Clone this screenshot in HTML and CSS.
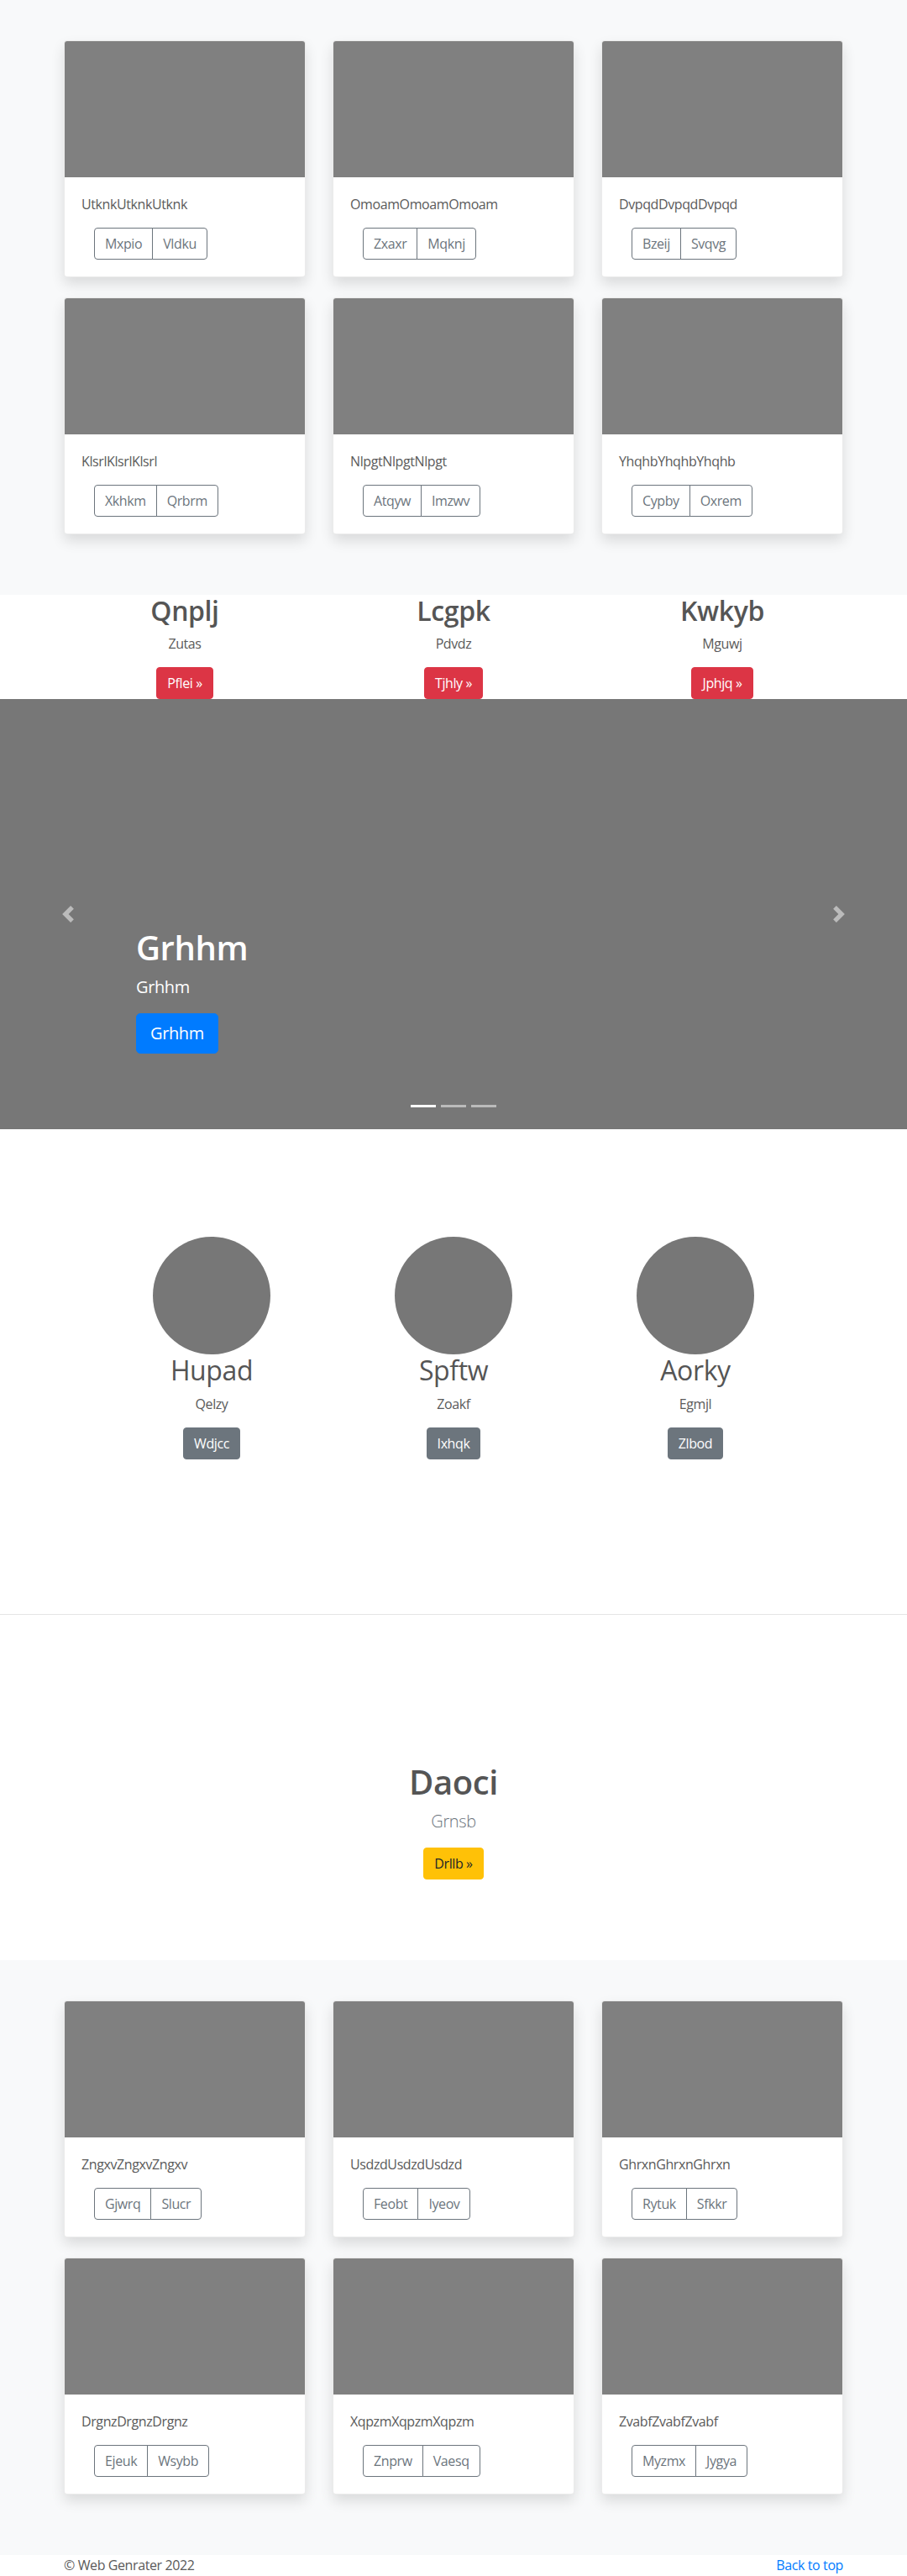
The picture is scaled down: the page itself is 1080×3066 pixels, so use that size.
FILE: index.html
```html
<!DOCTYPE html>
<html lang="en">
<head>
<meta charset="utf-8">
<title>Web Genrater</title>
<link rel="stylesheet" href="styles.css">
</head>
<body>
<main>
  <section class="album">
    <div class="card-grid">
      <div class="card"><div class="card-img"></div><div class="card-body"><p class="card-text">UtknkUtknkUtknk</p><div class="btn-group"><button class="btn btn-outline first">Mxpio</button><button class="btn btn-outline last">Vldku</button></div></div></div>
      <div class="card"><div class="card-img"></div><div class="card-body"><p class="card-text">OmoamOmoamOmoam</p><div class="btn-group"><button class="btn btn-outline first">Zxaxr</button><button class="btn btn-outline last">Mqknj</button></div></div></div>
      <div class="card"><div class="card-img"></div><div class="card-body"><p class="card-text">DvpqdDvpqdDvpqd</p><div class="btn-group"><button class="btn btn-outline first">Bzeij</button><button class="btn btn-outline last">Svqvg</button></div></div></div>
      <div class="card"><div class="card-img"></div><div class="card-body"><p class="card-text">KlsrlKlsrlKlsrl</p><div class="btn-group"><button class="btn btn-outline first">Xkhkm</button><button class="btn btn-outline last">Qrbrm</button></div></div></div>
      <div class="card"><div class="card-img"></div><div class="card-body"><p class="card-text">NlpgtNlpgtNlpgt</p><div class="btn-group"><button class="btn btn-outline first">Atqyw</button><button class="btn btn-outline last">Imzwv</button></div></div></div>
      <div class="card"><div class="card-img"></div><div class="card-body"><p class="card-text">YhqhbYhqhbYhqhb</p><div class="btn-group"><button class="btn btn-outline first">Cypby</button><button class="btn btn-outline last">Oxrem</button></div></div></div>
    </div>
  </section>

  <section class="features">
    <div class="col3">
      <div class="feature"><h2 class="feature-title">Qnplj</h2><p class="feature-text">Zutas</p><a class="btn btn-danger">Pflei &raquo;</a></div>
      <div class="feature"><h2 class="feature-title">Lcgpk</h2><p class="feature-text">Pdvdz</p><a class="btn btn-danger">Tjhly &raquo;</a></div>
      <div class="feature"><h2 class="feature-title">Kwkyb</h2><p class="feature-text">Mguwj</p><a class="btn btn-danger">Jphjq &raquo;</a></div>
    </div>
  </section>

  <section class="carousel">
    <div class="carousel-caption">
      <h1 class="caption-title">Grhhm</h1>
      <p class="caption-text">Grhhm</p>
      <a class="btn btn-primary btn-lg">Grhhm</a>
    </div>
    <a class="carousel-control prev" aria-label="Previous">
      <svg class="control-icon" viewBox="0 0 8 8" width="20" height="20"><path fill="#fff" d="M5.25 0l-4 4 4 4 1.5-1.5L4.25 4l2.5-2.5L5.25 0z"/></svg>
    </a>
    <a class="carousel-control next" aria-label="Next">
      <svg class="control-icon" viewBox="0 0 8 8" width="20" height="20"><path fill="#fff" d="M2.75 0l-1.5 1.5L3.75 4l-2.5 2.5L2.75 8l4-4-4-4z"/></svg>
    </a>
    <ol class="indicators">
      <li class="indicator active"></li>
      <li class="indicator"></li>
      <li class="indicator"></li>
    </ol>
  </section>

  <section class="team">
    <div class="team-grid">
      <div class="member"><div class="avatar"></div><h2 class="member-name">Hupad</h2><p class="member-role">Qelzy</p><a class="btn btn-secondary">Wdjcc</a></div>
      <div class="member"><div class="avatar"></div><h2 class="member-name">Spftw</h2><p class="member-role">Zoakf</p><a class="btn btn-secondary">Ixhqk</a></div>
      <div class="member"><div class="avatar"></div><h2 class="member-name">Aorky</h2><p class="member-role">Egmjl</p><a class="btn btn-secondary">Zlbod</a></div>
    </div>
  </section>

  <hr class="divider">

  <section class="jumbo">
    <h1 class="jumbo-title">Daoci</h1>
    <p class="jumbo-lead">Grnsb</p>
    <a class="btn btn-warning">Drllb &raquo;</a>
  </section>

  <section class="album">
    <div class="card-grid">
      <div class="card"><div class="card-img"></div><div class="card-body"><p class="card-text">ZngxvZngxvZngxv</p><div class="btn-group"><button class="btn btn-outline first">Gjwrq</button><button class="btn btn-outline last">Slucr</button></div></div></div>
      <div class="card"><div class="card-img"></div><div class="card-body"><p class="card-text">UsdzdUsdzdUsdzd</p><div class="btn-group"><button class="btn btn-outline first">Feobt</button><button class="btn btn-outline last">Iyeov</button></div></div></div>
      <div class="card"><div class="card-img"></div><div class="card-body"><p class="card-text">GhrxnGhrxnGhrxn</p><div class="btn-group"><button class="btn btn-outline first">Rytuk</button><button class="btn btn-outline last">Sfkkr</button></div></div></div>
      <div class="card"><div class="card-img"></div><div class="card-body"><p class="card-text">DrgnzDrgnzDrgnz</p><div class="btn-group"><button class="btn btn-outline first">Ejeuk</button><button class="btn btn-outline last">Wsybb</button></div></div></div>
      <div class="card"><div class="card-img"></div><div class="card-body"><p class="card-text">XqpzmXqpzmXqpzm</p><div class="btn-group"><button class="btn btn-outline first">Znprw</button><button class="btn btn-outline last">Vaesq</button></div></div></div>
      <div class="card"><div class="card-img"></div><div class="card-body"><p class="card-text">ZvabfZvabfZvabf</p><div class="btn-group"><button class="btn btn-outline first">Myzmx</button><button class="btn btn-outline last">Jygya</button></div></div></div>
    </div>
  </section>
</main>

<footer class="footer">
  <p class="copyright">&copy; Web Genrater 2022</p>
  <a class="back-top">Back to top</a>
</footer>
</body>
</html>
```

FILE: styles.css
```css
* { box-sizing: border-box; }

body {
  margin: 0;
  font-family: "Segoe UI", "Open Sans", "Noto Sans", sans-serif;
  font-size: 16px;
  line-height: 1.5;
  letter-spacing: -0.025em;
  color: #5a5a5a;
  background: #fff;
}

.btn {
  display: inline-block;
  font-family: inherit;
  font-size: 16px;
  line-height: 24px;
  letter-spacing: inherit;
  padding: 6px 12px;
  border: 1px solid transparent;
  border-radius: 4px;
  text-decoration: none;
  cursor: pointer;
  vertical-align: middle;
}

/* Album */
.album {
  background: #f8f9fa;
  padding: 48px 0 72px;
}
.card-grid {
  width: 928px;
  margin: 0 auto;
  display: grid;
  grid-template-columns: repeat(3, 288px);
  column-gap: 32px;
  row-gap: 24px;
}
.card {
  height: 282px;
  background: #fff;
  border: 1px solid rgba(0,0,0,.08);
  border-radius: 4px;
  box-shadow: 0 8px 16px rgba(0,0,0,.12);
  overflow: hidden;
}
.card-img {
  height: 162px;
  background: #808080;
}
.card-body {
  padding: 20px;
}
.card-text {
  margin: 0 0 16px;
  line-height: 24px;
  color: #5a5a5a;
}
.btn-group {
  display: inline-flex;
  margin-left: 15px;
}
.btn-outline {
  background: transparent;
  color: #6c757d;
  border-color: #6c757d;
}
.btn-outline.first { border-radius: 4px 0 0 4px; }
.btn-outline.last { border-radius: 0 4px 4px 0; margin-left: -1px; }

/* Features */
.features {
  background: #fff;
}
.col3 {
  width: 960px;
  margin: 0 auto;
  display: grid;
  grid-template-columns: repeat(3, 1fr);
  text-align: center;
}
.feature-title {
  margin: 0 0 8px;
  font-size: 32px;
  line-height: 38.4px;
  font-weight: 600;
  color: #555;
}
.feature-text {
  margin: 0 0 16px;
}
.btn-danger {
  background: #dc3545;
  border-color: #dc3545;
  color: #fff;
}

/* Carousel */
.carousel {
  position: relative;
  height: 512px;
  background: #777;
  overflow: hidden;
}
.carousel-caption {
  position: absolute;
  left: 162px;
  top: 272px;
  color: #fff;
}
.caption-title {
  margin: 0 0 8px;
  font-size: 40px;
  line-height: 48px;
  font-weight: 600;
}
.caption-text {
  margin: 0 0 16px;
  font-size: 20px;
  line-height: 30px;
}
.btn-lg {
  font-size: 20px;
  line-height: 30px;
  padding: 8px 16px;
  border-radius: 5px;
}
.btn-primary {
  background: #007bff;
  border-color: #007bff;
  color: #fff;
}
.carousel-control {
  position: absolute;
  top: 0;
  bottom: 0;
  width: 162px;
  display: flex;
  align-items: center;
  justify-content: center;
  opacity: .5;
}
.carousel-control.prev { left: 0; }
.carousel-control.next { right: 0; }
.control-icon { display: block; }
.indicators {
  position: absolute;
  left: 0;
  right: 0;
  bottom: 26px;
  margin: 0;
  padding: 0;
  list-style: none;
  display: flex;
  justify-content: center;
  gap: 6px;
}
.indicator {
  width: 30px;
  height: 3px;
  background: #fff;
  opacity: .5;
}
.indicator.active { opacity: 1; }

/* Team */
.team {
  padding: 128px 0 184px;
}
.team-grid {
  width: 864px;
  margin: 0 auto;
  display: grid;
  grid-template-columns: repeat(3, 1fr);
  text-align: center;
}
.avatar {
  width: 140px;
  height: 140px;
  border-radius: 50%;
  background: #777;
  margin: 0 auto;
}
.member-name {
  margin: 0 0 8px;
  font-size: 32px;
  line-height: 38.4px;
  font-weight: 400;
  color: #555;
}
.member-role {
  margin: 0 0 16px;
}
.btn-secondary {
  background: #6c757d;
  border-color: #6c757d;
  color: #fff;
}

.divider {
  margin: 0;
  border: 0;
  border-top: 1px solid #e5e5e5;
}

/* Jumbo */
.jumbo {
  padding: 175px 0 96px;
  text-align: center;
}
.jumbo-title {
  margin: 0 0 8px;
  font-size: 40px;
  line-height: 48px;
  font-weight: 600;
  color: #555;
}
.jumbo-lead {
  margin: 0 0 16px;
  font-size: 20px;
  line-height: 30px;
  font-weight: 300;
  color: #6c757d;
}
.btn-warning {
  background: #ffc107;
  border-color: #ffc107;
  color: #212529;
}

/* Footer */
.footer {
  width: 928px;
  margin: 0 auto;
  display: flex;
  justify-content: space-between;
  padding-bottom: 24px;
}
.copyright {
  margin: 0;
  color: #5a5a5a;
}
.back-top {
  color: #007bff;
  text-decoration: none;
}
```
